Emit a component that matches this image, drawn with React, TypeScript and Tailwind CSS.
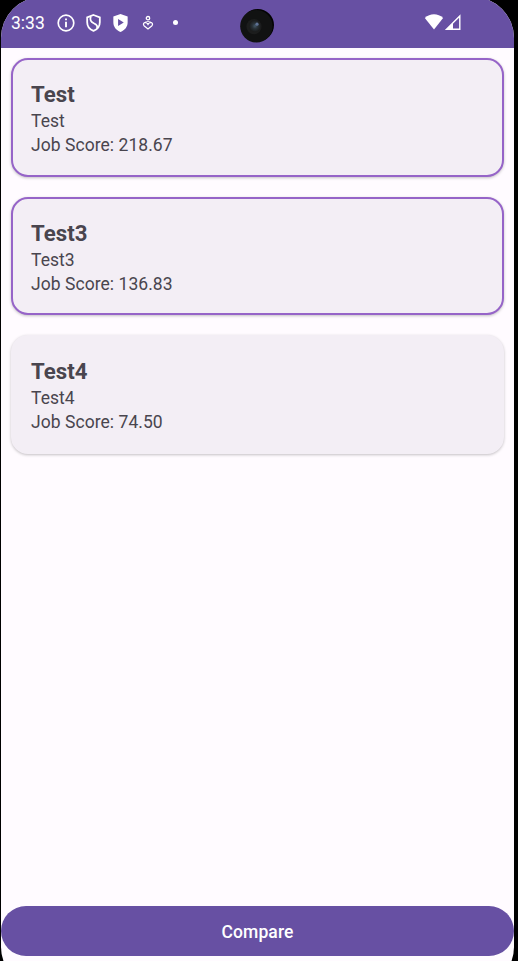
const jobs = [
  { title: "Test", company: "Test", score: "218.67", selected: true },
  { title: "Test3", company: "Test3", score: "136.83", selected: true },
  { title: "Test4", company: "Test4", score: "74.50", selected: false },
];

function StatusBar() {
  return (
    <header className="relative flex h-[51px] items-start bg-[#6750a3] pt-[3px] text-white">
      <span className="ml-[10px] mt-[11px] w-[45px] text-[17.5px] leading-[24px]">3:33</span>
      <svg className="mt-[13px]" width="20" height="20" viewBox="0 0 19 19" fill="none" stroke="currentColor">
        <circle cx="9.5" cy="9.5" r="7.4" strokeWidth="1.6" />
        <path d="M9.5 8.4V13.6M9.5 5.2V7" strokeWidth="1.8" />
      </svg>
      <svg className="ml-[8px] mt-[13px]" width="19" height="20" viewBox="0 0 18 19" fill="none" stroke="currentColor" strokeWidth="1.7">
        <path d="M9 1.9 L15 4.1 V8.8 C15 12.6 12.7 15.6 9 17 C5.3 15.6 3 12.6 3 8.8 V4.1 Z" />
        <path d="M6.4 3.3 C5.1 7.5 7.2 8.7 9.3 9.7 C12.2 11 13.2 12.5 12.3 14.7" />
      </svg>
      <svg className="ml-[8px] mt-[13px]" width="19" height="20" viewBox="0 0 18 19">
        <path fill="currentColor" fillRule="evenodd" d="M9 .9 L15.8 3.4 V8.8 C15.8 13.1 13.2 16.4 9 18 C4.8 16.4 2.2 13.1 2.2 8.8 V3.4 Z M6.7 5.7 V12.3 L12.1 9 Z" />
      </svg>
      <svg className="ml-[12px] mt-[15px]" width="12" height="16" viewBox="0 0 12 16" fill="none" stroke="currentColor" strokeWidth="1.3">
        <circle cx="6" cy="3.2" r="1.7" />
        <path d="M6 9.4 C5.1 7.8 3.5 7.1 2.3 7.8 C1.1 8.6 1.3 10 2.3 11 L6 14 L9.7 11 C10.7 10 10.9 8.6 9.7 7.8 C8.5 7.1 6.9 7.8 6 9.4 Z" />
        <path d="M3.2 7.2 C4.4 6.2 7.6 6.2 8.8 7.2" strokeWidth=".8" />
      </svg>
      <span className="ml-[19px] mt-[20px] size-[5px] rounded-full bg-white" />
      <svg className="absolute left-[238px] top-[11px]" width="36" height="36" viewBox="0 0 36 36">
        <defs>
          <radialGradient id="lens">
            <stop offset="0" stopColor="#435767" />
            <stop offset=".45" stopColor="#293238" />
            <stop offset="1" stopColor="#191a1a" />
          </radialGradient>
        </defs>
        <circle cx="18.8" cy="17.1" r="16.2" fill="#030303" />
        <circle cx="17.4" cy="18.2" r="16.2" fill="#111212" />
        <circle cx="15" cy="18.6" r="7.6" fill="#1c1d1d" />
        <circle cx="16" cy="18" r="6" fill="url(#lens)" />
        <circle cx="18" cy="16.2" r="1.6" fill="#5f7395" />
      </svg>
      <svg className="ml-auto mt-[13px]" width="20" height="18" viewBox="0 0 20 18" fill="currentColor">
        <path d="M.8 5.1 C6 .1 14 .1 19.1 5.1 L10 16.5 Z" />
      </svg>
      <svg className="mr-[53px] mt-[13px]" width="17" height="18" viewBox="0 0 17 18">
        <path fill="currentColor" fillRule="evenodd" d="M16.5 1.2 V17 H.8 Z M15.1 4.8 L9 10.8 V15.6 H15.1 Z" />
      </svg>
    </header>
  );
}

function JobCard({ job }: { job: (typeof jobs)[number] }) {
  return (
    <article
      className={
        "h-[118.5px] rounded-[17px] border-2 bg-[#f3eef5] pl-[18px] pt-[22px] text-[#49454e] shadow-[0_1px_3px_rgba(0,0,0,0.24)] " +
        (job.selected ? "border-[#9664c8]" : "border-[#f3eef5]")
      }
    >
      <h2 className="mb-[2px] text-[22.2px] font-bold leading-[25px]">{job.title}</h2>
      <p className="text-[17.5px] leading-[24.3px] tracking-[0.05px]">{job.company}</p>
      <p className="text-[17.5px] leading-[24.3px] tracking-[0.05px]">Job Score: {job.score}</p>
    </article>
  );
}

export default function App() {
  return (
    <div className="h-[961px] w-[518px] overflow-hidden bg-black pl-px pr-[4px] font-[Roboto,sans-serif]">
      <div className="-mt-[3px] flex h-[991px] flex-col overflow-hidden rounded-[41px] bg-[#fffbff]">
        <StatusBar />
        <main className="flex flex-1 flex-col gap-[20px] pl-[10px] pr-[10px] pt-[10px]">
          {jobs.map((job) => (
            <JobCard key={job.title} job={job} />
          ))}
        </main>
        <button className="mb-[32px] h-[50px] shrink-0 rounded-full bg-[#6750a3] pt-[2px] text-[17.5px] font-medium tracking-[0.1px] text-white">
          Compare
        </button>
      </div>
    </div>
  );
}
